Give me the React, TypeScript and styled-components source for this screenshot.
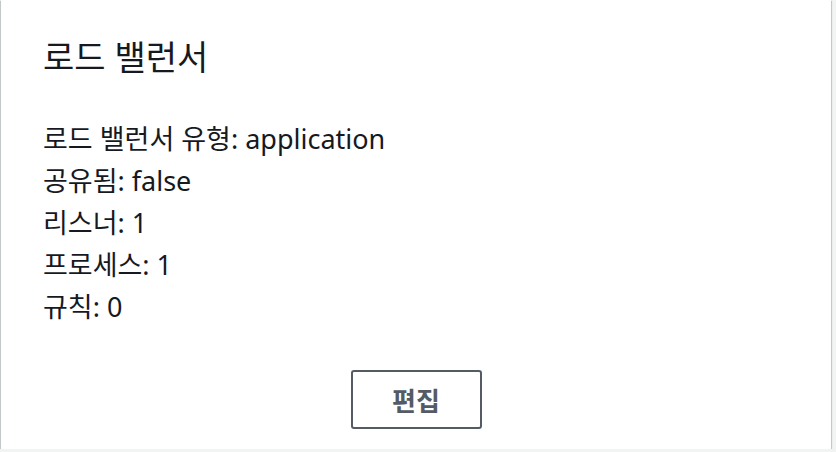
import React from "react";
import styled, { createGlobalStyle } from "styled-components";

const Global = createGlobalStyle`
  html, body { margin: 0; padding: 0; background: #f2f3f3; }
  body { font-family: "Noto Sans", "Noto Sans CJK KR", sans-serif; color: #16191f; }
`;

const Card = styled.section`
  box-sizing: border-box;
  width: 830px;
  height: 449px;
  margin-left: 1px;
  background: #ffffff;
  box-shadow: 0 1px 1px 0 rgba(0, 28, 36, 0.3), 1px 1px 1px 0 rgba(0, 28, 36, 0.15),
    -1px 1px 1px 0 rgba(0, 28, 36, 0.15);
  padding: 35px 42px 20px 42px;
  display: flex;
  flex-direction: column;
`;

const Title = styled.h2`
  margin: 0;
  font-size: 34px;
  font-weight: 400;
  line-height: 44px;
`;

const List = styled.div`
  margin-top: 39px;
  display: flex;
  flex-direction: column;
`;

const Row = styled.div`
  font-size: 27px;
  line-height: 42px;
`;

const Footer = styled.div`
  margin-top: auto;
  display: flex;
  justify-content: center;
`;

const Button = styled.button`
  box-sizing: border-box;
  width: 131px;
  height: 59px;
  background: #ffffff;
  border: 2px solid #545b64;
  border-radius: 3px;
  color: #545b64;
  font-family: "Noto Sans CJK KR", sans-serif;
  font-weight: 700;
  font-size: 26px;
  cursor: pointer;
`;

const rows = [
  "로드 밸런서 유형: application",
  "공유됨: false",
  "리스너: 1",
  "프로세스: 1",
  "규칙: 0",
];

export default function App() {
  return (
    <>
      <Global />
      <Card>
        <Title>로드 밸런서</Title>
        <List>
          {rows.map((r) => (
            <Row key={r}>{r}</Row>
          ))}
        </List>
        <Footer>
          <Button>편집</Button>
        </Footer>
      </Card>
    </>
  );
}
